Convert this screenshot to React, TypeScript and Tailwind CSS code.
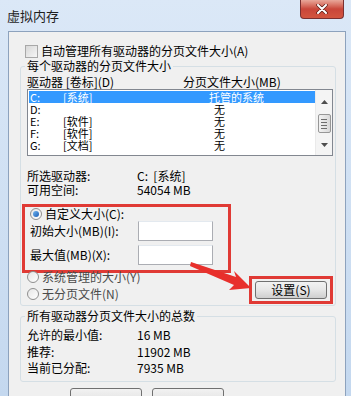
import React from 'react';

const font = { fontFamily: '"Noto Sans CJK SC", "Noto Sans", sans-serif' };

const drives = [
  { letter: 'C:', label: '[系统]', size: '托管的系统' },
  { letter: 'D:', label: '', size: '无' },
  { letter: 'E:', label: '[软件]', size: '无' },
  { letter: 'F:', label: '[软件]', size: '无' },
  { letter: 'G:', label: '[文档]', size: '无' },
];

const Radio = ({ checked }: { checked?: boolean }) => (
  <span className="w-[12px] h-[12px] rounded-full border border-[#8f8f8f] bg-gradient-to-br from-[#e6e6e6] to-[#ffffff] flex items-center justify-center shrink-0">
    {checked && <span className="w-[6px] h-[6px] rounded-full bg-gradient-to-br from-[#6fb4ef] to-[#1c5eb5]" />}
  </span>
);

const Field = () => (
  <div className="w-[75px] h-[20px] bg-white border border-[#abadb3] border-t-[#e3e9ef]" />
);

const App = () => {
  return (
    <div className="relative w-[351px] h-[396px] overflow-hidden bg-gradient-to-b from-[#dbe8f7] to-[#c4d8ef] text-[12px] text-black leading-[14px]" style={font}>
      {/* title bar */}
      <div className="relative h-[31px] flex items-center pl-[7px] pt-[1px] text-[13px] text-[#1e1e1e]">
        虚拟内存
        <div className="absolute top-0 right-[7px] w-[44px] h-[19px] rounded-b-[4px] border border-[#7a3030] border-t-0 bg-gradient-to-b from-[#e8a79a] via-[#c9463a] to-[#d3553f] flex items-center justify-center">
          <svg width="12" height="10" viewBox="0 0 12 10">
            <path d="M2 1 L10 9 M10 1 L2 9" stroke="#5a1a14" strokeWidth="3.4" strokeLinecap="round" />
            <path d="M2 1 L10 9 M10 1 L2 9" stroke="#ffffff" strokeWidth="2" strokeLinecap="round" />
          </svg>
        </div>
      </div>

      {/* client area */}
      <div className="ml-[8px] w-[338px] h-[380px] bg-[#f0f0f0] border border-[#8da2bd]">
        <div className="mt-[12px] h-[14px] flex items-center pl-[16px] gap-[3px]">
          <span className="w-[13px] h-[13px] border border-[#a8a8a8] bg-gradient-to-br from-[#d8d8d8] to-[#f6f6f6]" />
          <span>自动管理所有驱动器的分页文件大小(A)</span>
        </div>

        <fieldset className="ml-[11px] mr-[9px] mt-[1px] border border-[#d5dfe5] rounded-[3px] pl-[6px] pr-[2px] pb-[1px]">
          <legend className="px-[2px] -ml-[2px]">每个驱动器的分页文件大小</legend>
          <div className="mt-[2px] h-[14px] flex">
            <span className="w-[156px]">驱动器 [卷标](D)</span>
            <span>分页文件大小(MB)</span>
          </div>
          <div className="w-[306px] h-[67px] bg-white border border-[#828790] flex">
            <div className="flex-1 pt-[1px] pl-[1px] text-[11px]">
              {drives.map((d, i) => (
                <div key={d.letter} className={`h-[12px] leading-[12px] flex ${i === 0 ? 'bg-[#3399ff] text-white' : ''}`}>
                  <span className="w-[34px] pl-[1px]">{d.letter}</span>
                  <span className="w-[146px]">{d.label}</span>
                  <span className={i === 0 ? 'pl-0' : 'pl-[5px]'}>{d.size}</span>
                </div>
              ))}
            </div>
            <div className="w-[17px] flex flex-col items-center justify-between py-[2px] bg-[#f4f4f4] border-l border-[#eaeaea]">
              <svg width="7" height="4" viewBox="0 0 7 4" className="mt-[8px]"><path d="M0 4 L3.5 0 L7 4 Z" fill="#4d4d4d" /></svg>
              <div className="w-[13px] h-[19px] rounded-[2px] border border-[#979797] bg-gradient-to-r from-[#f2f2f2] to-[#d9d9d9] flex flex-col items-center justify-center gap-[2px]">
                <span className="w-[6px] h-px bg-[#6d6d6d]" />
                <span className="w-[6px] h-px bg-[#6d6d6d]" />
                <span className="w-[6px] h-px bg-[#6d6d6d]" />
                <span className="w-[6px] h-px bg-[#6d6d6d]" />
              </div>
              <svg width="7" height="4" viewBox="0 0 7 4" className="mb-[6px]"><path d="M0 0 L7 0 L3.5 4 Z" fill="#4d4d4d" /></svg>
            </div>
          </div>

          <div className="mt-[13px] flex">
            <span className="w-[110px]">所选驱动器:</span>
            <span>C:&nbsp;&nbsp;[系统]</span>
          </div>
          <div className="flex">
            <span className="w-[110px]">可用空间:</span>
            <span>54054 MB</span>
          </div>

          <div className="mt-[7px] -ml-[5px] w-[209px] border-[3px] border-[#e03a35] pl-[5px] pb-[5px]">
            <div className="h-[14px] flex items-center gap-[3px]">
              <Radio checked />
              <span>自定义大小(C):</span>
            </div>
            <div className="flex items-center">
              <span className="w-[108px]">初始大小(MB)(I):</span>
              <Field />
            </div>
            <div className="mt-[4px] flex items-center">
              <span className="w-[108px]">最大值(MB)(X):</span>
              <Field />
            </div>
          </div>

          <div className="-mt-[3px] flex justify-between">
            <div className="flex flex-col gap-[3px]">
              <div className="h-[14px] flex items-center gap-[3px]">
                <Radio />
                <span className="text-[#4a4a4a]">系统管理的大小(Y)</span>
              </div>
              <div className="h-[14px] flex items-center gap-[3px]">
                <Radio />
                <span className="text-[#4a4a4a]">无分页文件(N)</span>
              </div>
            </div>
            <div className="mt-[6px] w-[84px] h-[28px] border-[3px] border-[#e03a35] flex items-center justify-center">
              <div className="w-[72px] h-[18px] rounded-[3px] border border-[#707070] bg-gradient-to-b from-[#f2f2f2] via-[#e6e6e6] to-[#cfcfcf] flex items-center justify-center">
                设置(S)
              </div>
            </div>
          </div>
        </fieldset>

        <fieldset className="mt-[3px] ml-[11px] mr-[9px] h-[73px] border border-[#d5dfe5] rounded-[3px] pl-[6px]">
          <legend className="px-[2px] -ml-[2px]">所有驱动器分页文件大小的总数</legend>
          <div className="mt-[4px] flex h-[16px] items-center">
            <span className="w-[110px]">允许的最小值:</span>
            <span>16 MB</span>
          </div>
          <div className="flex h-[17px] items-center">
            <span className="w-[110px]">推荐:</span>
            <span>11902 MB</span>
          </div>
          <div className="flex h-[16px] items-center">
            <span className="w-[110px]">当前已分配:</span>
            <span>7935 MB</span>
          </div>
        </fieldset>

        <div className="mt-[6px] ml-[61px] flex gap-[10px]">
          <div className="w-[72px] h-[20px] rounded-[3px] border border-[#707070] bg-gradient-to-b from-[#f2f2f2] to-[#dcdcdc]" />
          <div className="w-[72px] h-[20px] rounded-[3px] border border-[#707070] bg-gradient-to-b from-[#f2f2f2] to-[#dcdcdc]" />
        </div>
      </div>

      {/* red arrow */}
      <svg className="absolute left-0 top-0 pointer-events-none" width="351" height="396" viewBox="0 0 351 396">
        <path d="M191 262 L236 277 L234 271 L251 288 L229 290 L234 285 L190 266 Z" fill="#e8302c" />
      </svg>
    </div>
  );
};

export default App;
